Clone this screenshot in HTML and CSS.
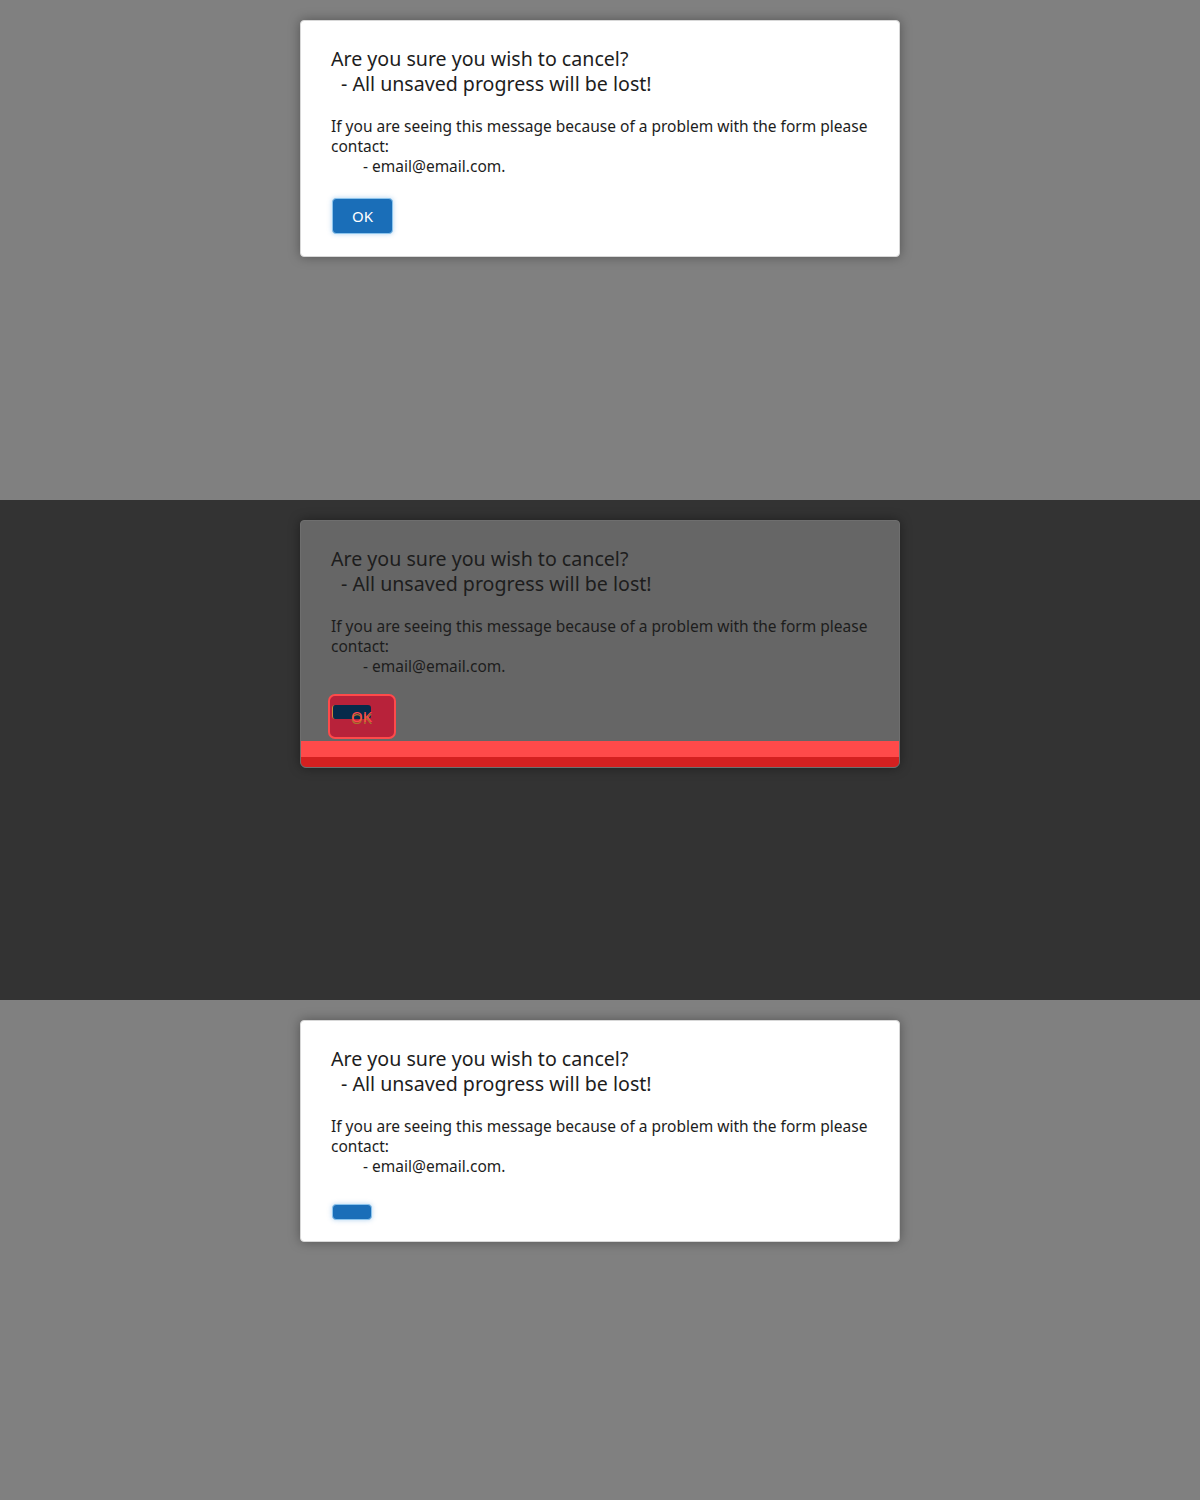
FILE: index.html
```html
<!DOCTYPE html>
<html>
<head>
<meta charset="utf-8">
<link rel="stylesheet" href="styles.css">
</head>
<body>
<section class="stage stage-light">
  <div class="dialog">
    <div class="title">
      <div>Are you sure you wish to cancel?</div>
      <div class="indent-sm">- All unsaved progress will be lost!</div>
    </div>
    <div class="body">
      <div>If you are seeing this message because of a problem with the form please contact:</div>
      <div class="indent-lg">- email@email.com.</div>
    </div>
    <div class="actions"><button class="btn">OK</button></div>
  </div>
</section>
<section class="stage stage-dark">
  <div class="dialog dialog-dim">
    <div class="title">
      <div>Are you sure you wish to cancel?</div>
      <div class="indent-sm">- All unsaved progress will be lost!</div>
    </div>
    <div class="body">
      <div>If you are seeing this message because of a problem with the form please contact:</div>
      <div class="indent-lg">- email@email.com.</div>
    </div>
    <div class="actions actions-hl">
      <div class="btn-hl"><span class="btn-ghost"></span><span class="btn-hl-text">OK</span></div>
    </div>
    <div class="bar-hl"></div>
  </div>
</section>
<section class="stage stage-light">
  <div class="dialog dialog-short">
    <div class="title">
      <div>Are you sure you wish to cancel?</div>
      <div class="indent-sm">- All unsaved progress will be lost!</div>
    </div>
    <div class="body">
      <div>If you are seeing this message because of a problem with the form please contact:</div>
      <div class="indent-lg">- email@email.com.</div>
    </div>
    <div class="actions actions-empty"><button class="btn btn-empty"></button></div>
  </div>
</section>
</body>
</html>
```
FILE: styles.css
```css
* { box-sizing: border-box; }
html, body { margin: 0; padding: 0; }
body { font-family: "Noto Sans", sans-serif; color: #1d1d1d; }
.stage { height: 500px; padding-top: 20px; overflow: hidden; }
.stage-light { background: #808080; }
.stage-dark { background: #333333; }
.dialog {
  width: 600px;
  margin: 0 auto;
  background: #fff;
  border: 1px solid #d8d8d8;
  border-radius: 4px;
  box-shadow: 0 0 12px rgba(0,0,0,0.35);
  padding: 25px 30px 22px;
}
.dialog-short { padding-bottom: 21px; }
.title { font-size: 19.6px; line-height: 25px; }
.indent-sm { padding-left: 10px; }
.body { margin-top: 20px; font-size: 15.5px; line-height: 20px; }
.indent-lg { padding-left: 32px; }
.actions { margin-top: 22px; display: flex; }
.btn {
  width: 61px;
  height: 36px;
  margin-left: 1px;
  background: #1a6eb8;
  color: #fff;
  border: 1px solid #8cc4ec;
  border-radius: 4px;
  box-shadow: 0 0 5px rgba(40,130,210,0.35);
  font-family: inherit;
  font-size: 15px;
  padding: 0;
}
.actions-empty { margin-top: 28px; }
.btn-empty { width: 40px; height: 16px; border-radius: 4px; }

.dialog-dim {
  background: #666666;
  border-color: #6e6e6e;
  padding-bottom: 0;
  box-shadow: 0 0 12px rgba(0,0,0,0.4);
  overflow: hidden;
  border-radius: 4px 4px 6px 6px;
}
.actions-hl { margin-top: 18px; margin-left: -3px; }
.btn-hl {
  position: relative;
  width: 68px;
  height: 45px;
  background: #b8223a;
  border: 2px solid #ff4a4a;
  border-radius: 7px;
}
.btn-ghost {
  position: absolute;
  left: 2px;
  top: 9px;
  width: 39px;
  height: 14px;
  background: #062a4a;
  border-radius: 3px;
  border-left: 1px solid #c88a3a;
}
.btn-hl-text {
  position: absolute;
  left: 21px;
  top: 10px;
  color: #ff4a4a;
  font-size: 15px;
  line-height: 20px;
  text-shadow: 0 2px 0 #a8742c;
}
.bar-hl {
  margin: 2px -31px 0;
  height: 26px;
  background: linear-gradient(#ff4a4a 0 16px, #d42020 16px);
}
```
